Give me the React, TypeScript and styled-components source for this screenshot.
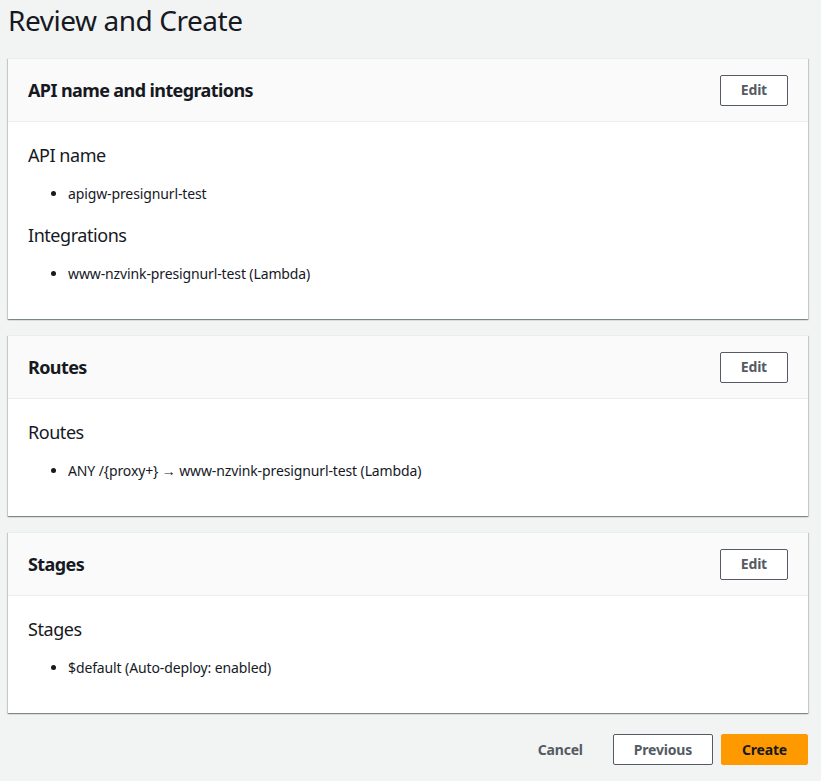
import React from "react";
import styled, { createGlobalStyle } from "styled-components";

const Global = createGlobalStyle`
  html, body { background: #f2f3f3; }
  body {
    margin: 0;
    font-family: "Noto Sans", "Open Sans", Arial, sans-serif;
    color: #16191f;
  }
`;

const Page = styled.div`
  width: 800px;
  padding: 0 8px 16px 8px;
`;

const Title = styled.h1`
  margin: 0;
  padding: 2px 0 0 0;
  font-size: 28px;
  line-height: 36px;
  font-weight: 400;
  letter-spacing: -0.45px;
  color: #16191f;
  height: 56px;
`;

const Card = styled.section`
  background: #fff;
  border-top: 1px solid #eaeded;
  box-shadow: 0 1px 1px 0 rgba(0, 28, 36, 0.3), 1px 1px 1px 0 rgba(0, 28, 36, 0.15),
    -1px 1px 1px 0 rgba(0, 28, 36, 0.15);
  margin-bottom: 16px;
`;

const CardHeader = styled.header`
  display: flex;
  align-items: center;
  justify-content: space-between;
  height: 63px;
  box-sizing: border-box;
  padding: 0 20px;
  background: #fafafa;
  border-bottom: 1px solid #eaeded;
`;

const CardTitle = styled.h2`
  margin: 0;
  font-size: 18px;
  line-height: 22px;
  font-weight: 700;
  letter-spacing: -0.6px;
`;

const Button = styled.button<{ $variant?: "normal" | "primary" | "link" }>`
  font-family: inherit;
  font-size: 14px;
  font-weight: 700;
  line-height: 20px;
  letter-spacing: -0.2px;
  border-radius: 2px;
  cursor: pointer;
  box-sizing: border-box;
  height: 31px;
  padding: 0 20px;
  border: 1px solid
    ${(p) => (p.$variant === "primary" ? "#ff9900" : p.$variant === "link" ? "transparent" : "#545b64")};
  background: ${(p) => (p.$variant === "primary" ? "#ff9900" : p.$variant === "link" ? "transparent" : "#fff")};
  color: ${(p) => (p.$variant === "primary" ? "#16191f" : "#545b64")};
`;

const CardBody = styled.div`
  padding: 22px 20px 35px 20px;
`;

const SubTitle = styled.h3`
  margin: 0 0 18px 0;
  font-size: 18px;
  line-height: 22px;
  font-weight: 400;
  letter-spacing: -0.45px;
  & + ul + & {
    margin-top: 20px;
  }
`;

const List = styled.ul`
  margin: 0;
  padding-left: 40px;
  font-size: 14px;
  line-height: 20px;
  letter-spacing: -0.12px;
`;

const Item = styled.li``;

const Footer = styled.div`
  display: flex;
  justify-content: flex-end;
  gap: 9px;
  padding-top: 5px;
`;

const FooterGroup = styled.div`
  display: flex;
  gap: 8px;
`;

type Section = { label: string; items: string[] };

const cards: { title: string; sections: Section[] }[] = [
  {
    title: "API name and integrations",
    sections: [
      { label: "API name", items: ["apigw-presignurl-test"] },
      { label: "Integrations", items: ["www-nzvink-presignurl-test (Lambda)"] },
    ],
  },
  {
    title: "Routes",
    sections: [
      { label: "Routes", items: ["ANY /{proxy+} \u2192 www-nzvink-presignurl-test (Lambda)"] },
    ],
  },
  {
    title: "Stages",
    sections: [{ label: "Stages", items: ["$default (Auto-deploy: enabled)"] }],
  },
];

export default function App() {
  return (
    <Page>
      <Global />
      <Title>Review and Create</Title>
      {cards.map((c) => (
        <Card key={c.title}>
          <CardHeader>
            <CardTitle>{c.title}</CardTitle>
            <Button $variant="normal">Edit</Button>
          </CardHeader>
          <CardBody>
            {c.sections.map((s) => (
              <React.Fragment key={s.label}>
                <SubTitle>{s.label}</SubTitle>
                <List>
                  {s.items.map((i) => (
                    <Item key={i}>{i}</Item>
                  ))}
                </List>
              </React.Fragment>
            ))}
          </CardBody>
        </Card>
      ))}
      <Footer>
        <Button $variant="link">Cancel</Button>
        <FooterGroup>
          <Button $variant="normal">Previous</Button>
          <Button $variant="primary">Create</Button>
        </FooterGroup>
      </Footer>
    </Page>
  );
}
